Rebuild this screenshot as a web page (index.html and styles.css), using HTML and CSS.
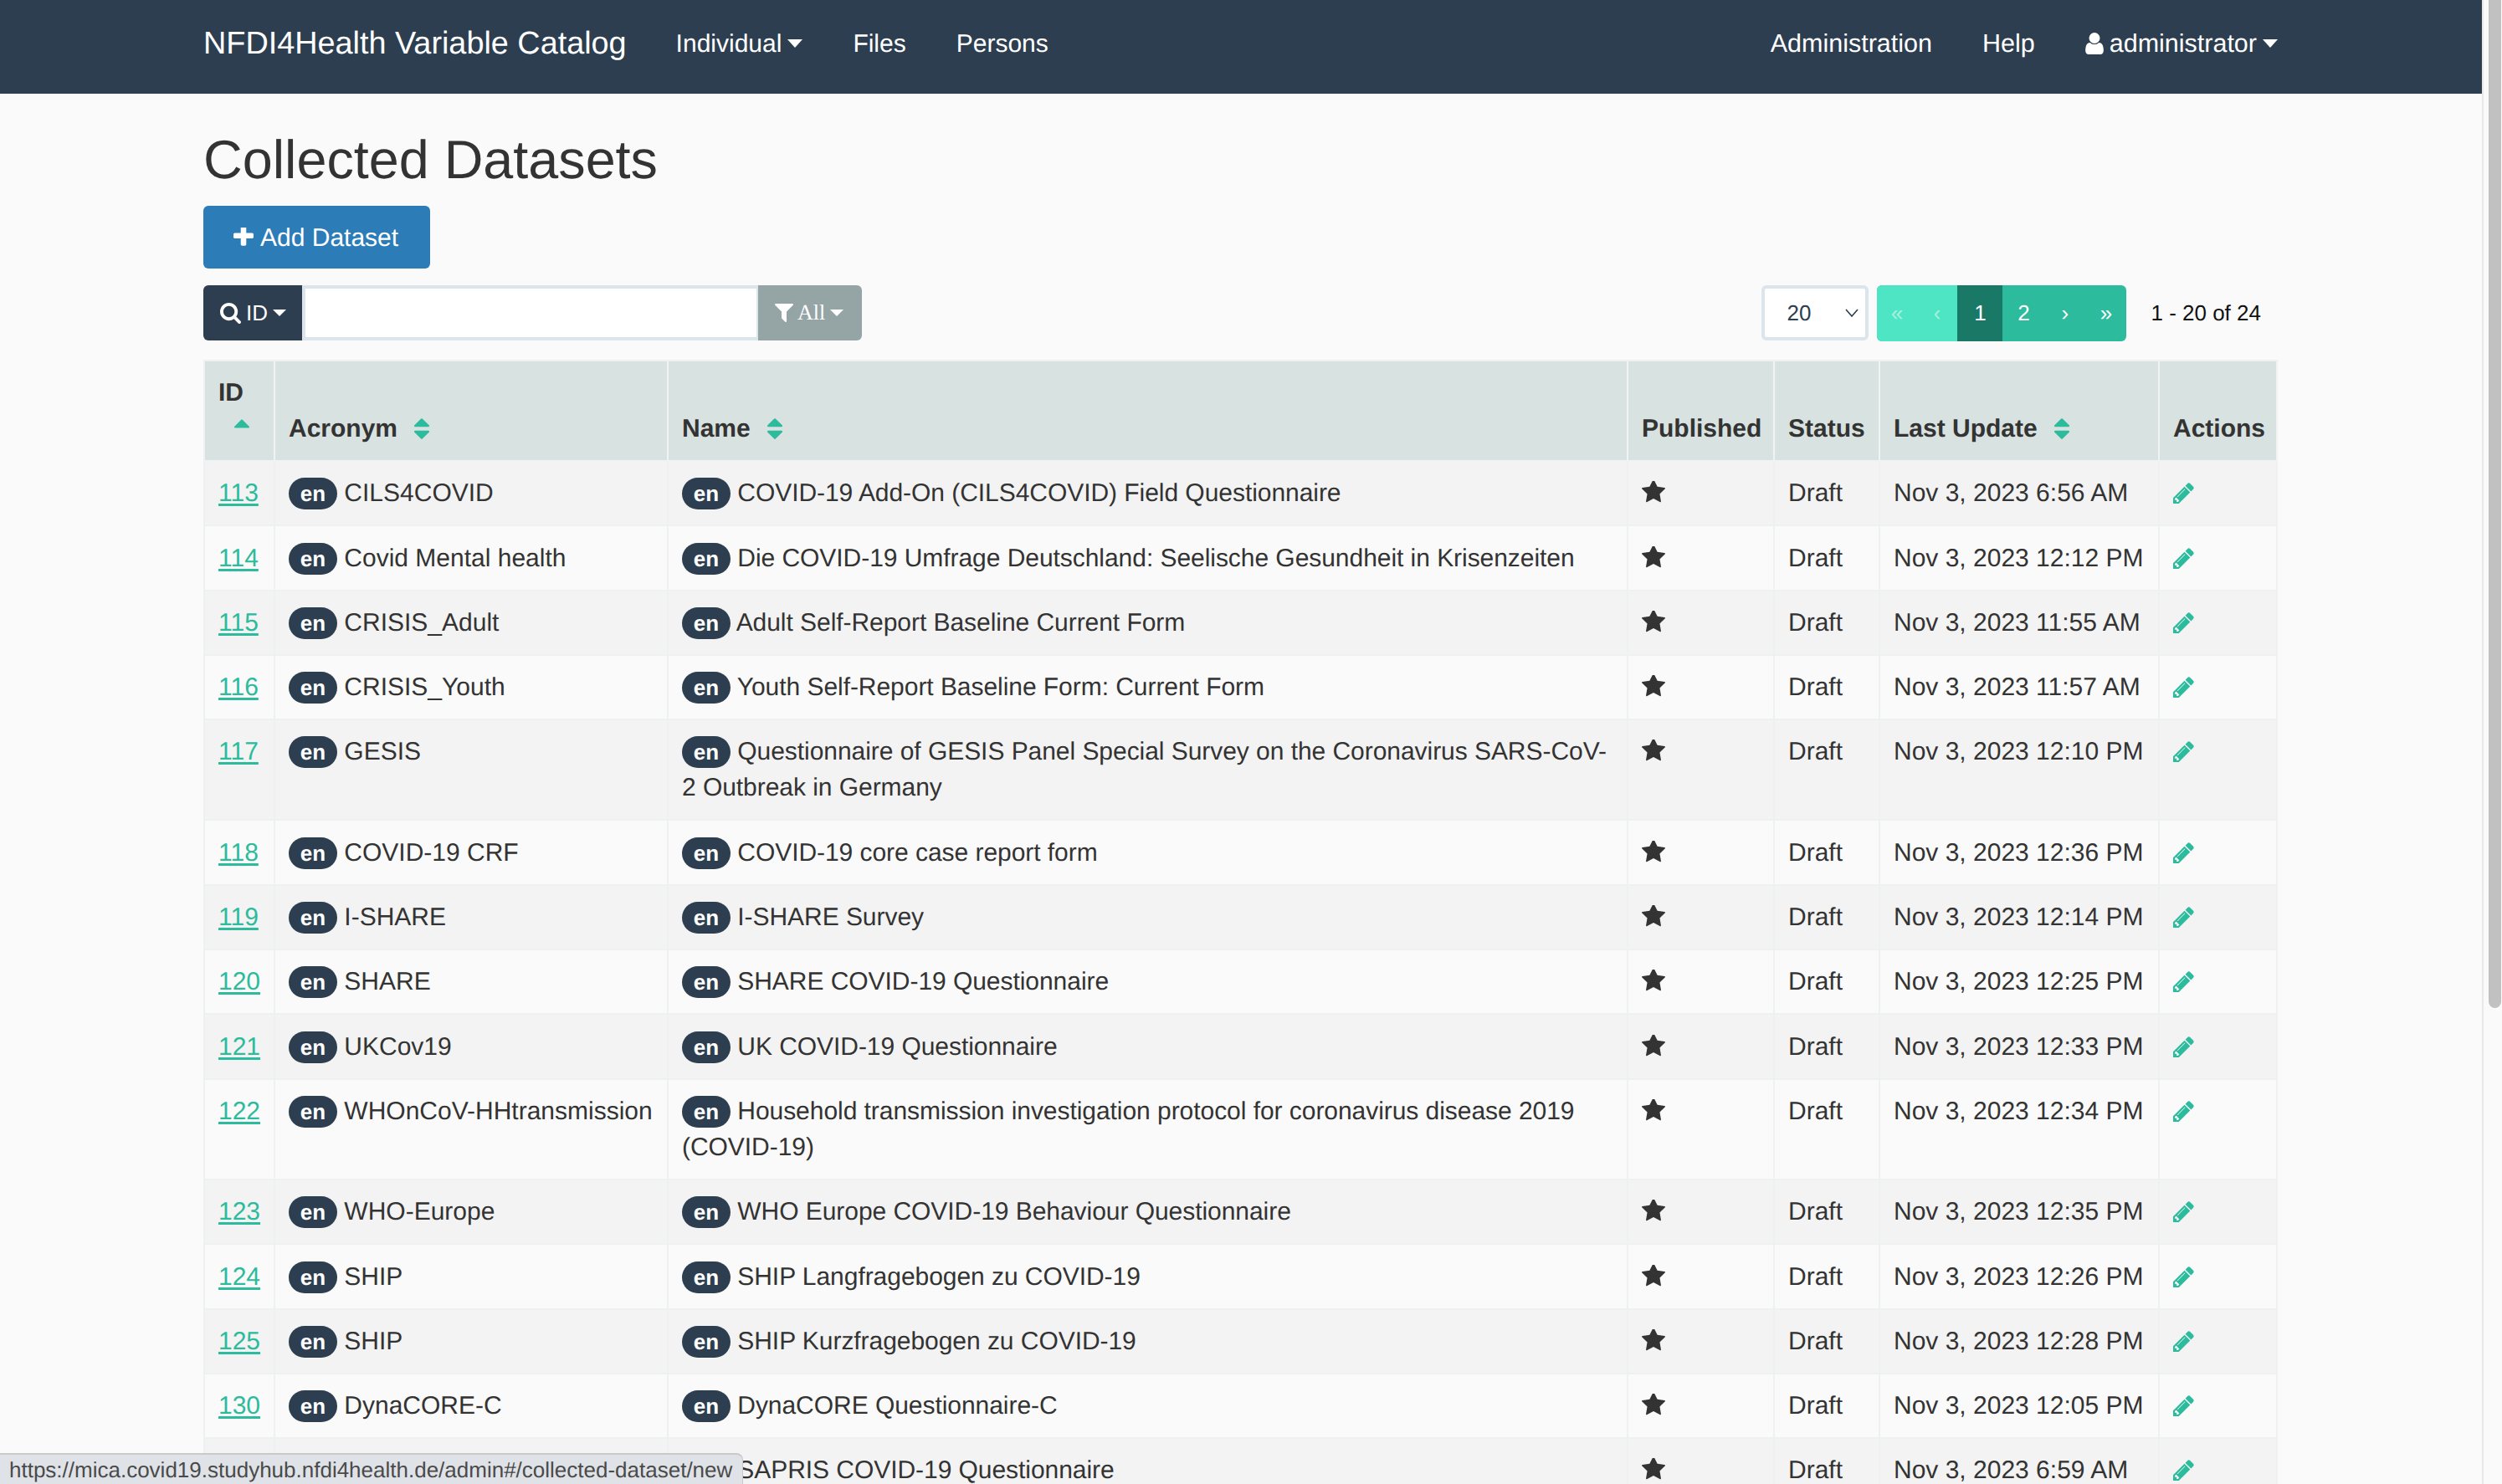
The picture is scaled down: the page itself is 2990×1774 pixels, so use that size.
FILE: index.html
```html
<!DOCTYPE html>
<html lang="en">
<head>
<meta charset="utf-8">
<title>Collected Datasets</title>
<link rel="stylesheet" href="styles.css">
</head>
<body>
<svg class="defs" xmlns="http://www.w3.org/2000/svg">
  <symbol id="i-pencil" viewBox="128 128 1536 1536"><path d="M491 1536l91-91-235-235-91 91v107h128v128h107zm523-928q0-22-22-22-10 0-17 7l-542 542q-7 7-7 17 0 22 22 22 10 0 17-7l542-542q7-7 7-17zm-54-192l416 416-832 832h-416v-416zm683 96q0 53-37 90l-166 166-416-416 166-165q36-38 90-38 53 0 91 38l235 234q37 39 37 91z"/></symbol>
  <symbol id="i-star" viewBox="64 128 1664 1600"><path d="M1728 647q0 22-26 48l-363 354 86 500q1 7 1 20 0 21-10.5 35.5t-30.5 14.5q-19 0-40-12l-449-236-449 236q-22 12-40 12-21 0-31.5-14.5t-10.5-35.5q0-6 2-20l86-500-364-354q-25-27-25-48 0-37 56-46l502-73 225-455q19-41 49-41t49 41l225 455 502 73q56 9 56 46z"/></symbol>
  <symbol id="i-user" viewBox="256 128 1280 1536"><path d="M1536 1399q0 109-62.5 187t-150.5 78h-854q-88 0-150.5-78t-62.5-187q0-85 8.5-160.5t31.5-152 58.5-131 94-89 134.5-34.5q131 128 313 128t313-128q76 0 134.5 34.5t94 89 58.5 131 31.5 152 8.5 160.5zm-256-887q0 159-112.5 271.5t-271.5 112.5-271.5-112.5-112.5-271.5 112.5-271.5 271.5-112.5 271.5 112.5 112.5 271.5z"/></symbol>
  <symbol id="i-search" viewBox="64 128 1664 1664"><path d="M1216 832q0-185-131.5-316.5t-316.5-131.5-316.5 131.5-131.5 316.5 131.5 316.5 316.5 131.5 316.5-131.5 131.5-316.5zm512 832q0 52-38 90t-90 38q-54 0-90-38l-343-342q-179 124-399 124-143 0-273.5-55.5t-225-150-150-225-55.5-273.5 55.5-273.5 150-225 225-150 273.5-55.5 273.5 55.5 225 150 150 225 55.5 273.5q0 220-124 399l343 343q37 37 37 90z"/></symbol>
  <symbol id="i-filter" viewBox="192 256 1408 1408"><path d="M1595 295q17 41-14 70l-493 493v742q0 42-39 59-13 5-25 5-27 0-45-19l-256-256q-19-19-19-45v-486l-493-493q-31-29-14-70 17-39 59-39h1280q42 0 59 39z"/></symbol>
  <symbol id="i-plus" viewBox="192 256 1408 1408"><path d="M1600 736v192q0 40-28 68t-68 28h-416v416q0 40-28 68t-68 28h-192q-40 0-68-28t-28-68v-416h-416q-40 0-68-28t-28-68v-192q0-40 28-68t68-28h416v-416q0-40 28-68t68-28h192q40 0 68 28t28 68v416h416q40 0 68 28t28 68z"/></symbol>
  <symbol id="i-sort" viewBox="384 192 1024 1408"><path d="M1408 1088q0 26-19 45l-448 448q-19 19-45 19t-45-19l-448-448q-19-19-19-45t19-45 45-19h896q26 0 45 19t19 45zm0-384q0 26-19 45t-45 19h-896q-26 0-45-19t-19-45 19-45l448-448q19-19 45-19t45 19l448 448q19 19 19 45z"/></symbol>
  <symbol id="i-sort-up" viewBox="384 192 1024 576"><path d="M1408 704q0 26-19 45t-45 19h-896q-26 0-45-19t-19-45 19-45l448-448q19-19 45-19t45 19l448 448q19 19 19 45z"/></symbol>
</svg>

<div class="page">
  <nav class="navbar">
    <a class="brand" href="#">NFDI4Health Variable Catalog</a>
    <a class="nav-link" href="#">Individual<span class="caret"></span></a>
    <a class="nav-link" href="#">Files</a>
    <a class="nav-link" href="#">Persons</a>
    <span class="nav-spacer"></span>
    <a class="nav-link nav-right" href="#">Administration</a>
    <a class="nav-link nav-right" href="#">Help</a>
    <a class="nav-link nav-right nav-last" href="#"><svg class="ic ic-user"><use href="#i-user"/></svg>administrator<span class="caret"></span></a>
  </nav>

  <main class="content">
    <h1 class="title">Collected Datasets</h1>
    <a class="btn-add" href="#"><svg class="ic ic-plus"><use href="#i-plus"/></svg>Add Dataset</a>

    <div class="toolbar">
      <div class="search">
        <button class="search-by" type="button"><svg class="ic ic-search"><use href="#i-search"/></svg>ID<span class="caret caret-sm"></span></button>
        <input class="search-input" type="text">
        <button class="search-filter" type="button"><svg class="ic ic-filter"><use href="#i-filter"/></svg>All<span class="caret caret-sm"></span></button>
      </div>
      <div class="paging">
        <div class="page-size"><span>20</span><svg class="chev" viewBox="0 0 16 10"><path d="M1 1l7 8 7-8" fill="none" stroke="#2c3e50" stroke-width="1.6"/></svg></div>
        <ul class="pager">
          <li class="off first">«</li>
          <li class="off">‹</li>
          <li class="on">1</li>
          <li class="second">2</li>
          <li>›</li>
          <li>»</li>
        </ul>
        <span class="count">1 - 20 of 24</span>
      </div>
    </div>

    <table class="grid">
      <colgroup>
        <col class="c-id"><col class="c-acr"><col class="c-name"><col class="c-pub"><col class="c-status"><col class="c-date"><col class="c-act">
      </colgroup>
      <thead>
        <tr>
          <th>ID <svg class="ic ic-sort-up"><use href="#i-sort-up"/></svg></th>
          <th>Acronym <svg class="ic ic-sort"><use href="#i-sort"/></svg></th>
          <th>Name <svg class="ic ic-sort"><use href="#i-sort"/></svg></th>
          <th>Published</th>
          <th>Status</th>
          <th>Last Update <svg class="ic ic-sort"><use href="#i-sort"/></svg></th>
          <th>Actions</th>
        </tr>
      </thead>
      <tbody>
        <tr><td><a href="#">113</a></td><td><span class="badge">en</span> CILS4COVID</td><td><span class="badge">en</span> COVID-19 Add-On (CILS4COVID) Field Questionnaire</td><td><svg class="ic ic-star"><use href="#i-star"/></svg></td><td>Draft</td><td>Nov 3, 2023 6:56 AM</td><td><svg class="ic ic-pencil"><use href="#i-pencil"/></svg></td></tr>
        <tr><td><a href="#">114</a></td><td><span class="badge">en</span> Covid Mental health</td><td><span class="badge">en</span> Die COVID-19 Umfrage Deutschland: Seelische Gesundheit in Krisenzeiten</td><td><svg class="ic ic-star"><use href="#i-star"/></svg></td><td>Draft</td><td>Nov 3, 2023 12:12 PM</td><td><svg class="ic ic-pencil"><use href="#i-pencil"/></svg></td></tr>
        <tr><td><a href="#">115</a></td><td><span class="badge">en</span> CRISIS_Adult</td><td><span class="badge">en</span> Adult Self-Report Baseline Current Form</td><td><svg class="ic ic-star"><use href="#i-star"/></svg></td><td>Draft</td><td>Nov 3, 2023 11:55 AM</td><td><svg class="ic ic-pencil"><use href="#i-pencil"/></svg></td></tr>
        <tr><td><a href="#">116</a></td><td><span class="badge">en</span> CRISIS_Youth</td><td><span class="badge">en</span> Youth Self-Report Baseline Form: Current Form</td><td><svg class="ic ic-star"><use href="#i-star"/></svg></td><td>Draft</td><td>Nov 3, 2023 11:57 AM</td><td><svg class="ic ic-pencil"><use href="#i-pencil"/></svg></td></tr>
        <tr><td><a href="#">117</a></td><td><span class="badge">en</span> GESIS</td><td><span class="badge">en</span> Questionnaire of GESIS Panel Special Survey on the Coronavirus SARS-CoV-2 Outbreak in Germany</td><td><svg class="ic ic-star"><use href="#i-star"/></svg></td><td>Draft</td><td>Nov 3, 2023 12:10 PM</td><td><svg class="ic ic-pencil"><use href="#i-pencil"/></svg></td></tr>
        <tr><td><a href="#">118</a></td><td><span class="badge">en</span> COVID-19 CRF</td><td><span class="badge">en</span> COVID-19 core case report form</td><td><svg class="ic ic-star"><use href="#i-star"/></svg></td><td>Draft</td><td>Nov 3, 2023 12:36 PM</td><td><svg class="ic ic-pencil"><use href="#i-pencil"/></svg></td></tr>
        <tr><td><a href="#">119</a></td><td><span class="badge">en</span> I-SHARE</td><td><span class="badge">en</span> I-SHARE Survey</td><td><svg class="ic ic-star"><use href="#i-star"/></svg></td><td>Draft</td><td>Nov 3, 2023 12:14 PM</td><td><svg class="ic ic-pencil"><use href="#i-pencil"/></svg></td></tr>
        <tr><td><a href="#">120</a></td><td><span class="badge">en</span> SHARE</td><td><span class="badge">en</span> SHARE COVID-19 Questionnaire</td><td><svg class="ic ic-star"><use href="#i-star"/></svg></td><td>Draft</td><td>Nov 3, 2023 12:25 PM</td><td><svg class="ic ic-pencil"><use href="#i-pencil"/></svg></td></tr>
        <tr><td><a href="#">121</a></td><td><span class="badge">en</span> UKCov19</td><td><span class="badge">en</span> UK COVID-19 Questionnaire</td><td><svg class="ic ic-star"><use href="#i-star"/></svg></td><td>Draft</td><td>Nov 3, 2023 12:33 PM</td><td><svg class="ic ic-pencil"><use href="#i-pencil"/></svg></td></tr>
        <tr><td><a href="#">122</a></td><td><span class="badge">en</span> WHOnCoV-HHtransmission</td><td><span class="badge">en</span> Household transmission investigation protocol for coronavirus disease 2019 (COVID-19)</td><td><svg class="ic ic-star"><use href="#i-star"/></svg></td><td>Draft</td><td>Nov 3, 2023 12:34 PM</td><td><svg class="ic ic-pencil"><use href="#i-pencil"/></svg></td></tr>
        <tr><td><a href="#">123</a></td><td><span class="badge">en</span> WHO-Europe</td><td><span class="badge">en</span> WHO Europe COVID-19 Behaviour Questionnaire</td><td><svg class="ic ic-star"><use href="#i-star"/></svg></td><td>Draft</td><td>Nov 3, 2023 12:35 PM</td><td><svg class="ic ic-pencil"><use href="#i-pencil"/></svg></td></tr>
        <tr><td><a href="#">124</a></td><td><span class="badge">en</span> SHIP</td><td><span class="badge">en</span> SHIP Langfragebogen zu COVID-19</td><td><svg class="ic ic-star"><use href="#i-star"/></svg></td><td>Draft</td><td>Nov 3, 2023 12:26 PM</td><td><svg class="ic ic-pencil"><use href="#i-pencil"/></svg></td></tr>
        <tr><td><a href="#">125</a></td><td><span class="badge">en</span> SHIP</td><td><span class="badge">en</span> SHIP Kurzfragebogen zu COVID-19</td><td><svg class="ic ic-star"><use href="#i-star"/></svg></td><td>Draft</td><td>Nov 3, 2023 12:28 PM</td><td><svg class="ic ic-pencil"><use href="#i-pencil"/></svg></td></tr>
        <tr><td><a href="#">130</a></td><td><span class="badge">en</span> DynaCORE-C</td><td><span class="badge">en</span> DynaCORE Questionnaire-C</td><td><svg class="ic ic-star"><use href="#i-star"/></svg></td><td>Draft</td><td>Nov 3, 2023 12:05 PM</td><td><svg class="ic ic-pencil"><use href="#i-pencil"/></svg></td></tr>
        <tr><td><a href="#">131</a></td><td><span class="badge">en</span> SAPRIS</td><td><span class="badge">en</span> SAPRIS COVID-19 Questionnaire</td><td><svg class="ic ic-star"><use href="#i-star"/></svg></td><td>Draft</td><td>Nov 3, 2023 6:59 AM</td><td><svg class="ic ic-pencil"><use href="#i-pencil"/></svg></td></tr>
      </tbody>
    </table>
  </main>
</div>

<div class="scrollbar"><div class="thumb"></div></div>
<div class="status-url">https://mica.covid19.studyhub.nfdi4health.de/admin#/collected-dataset/new</div>
</body>
</html>
```

FILE: styles.css
```css
* { box-sizing: border-box; }
html, body { height: 100%; }
body {
  margin: 0;
  display: flex;
  overflow: hidden;
  background: #fafafa;
  color: #333;
  font-family: "Liberation Sans", Arial, sans-serif;
  font-size: 30px;
  line-height: 43px;
  text-rendering: geometricPrecision;
}
a { color: inherit; text-decoration: none; }
.defs { position: absolute; width: 0; height: 0; }
.ic { fill: currentColor; display: inline-block; }

.page { flex: 1; min-width: 0; height: 100%; overflow: hidden; }
.scrollbar { flex: 0 0 24px; background: #fafafa; border-left: 2px solid #e8e8e8; padding: 0 1px 0 6px; }
.thumb { height: 1205px; background: #c1c1c1; border-radius: 0 0 8px 8px; }

.navbar {
  height: 112px;
  background: #2c3e50;
  color: #fff;
  display: flex;
  align-items: flex-start;
  padding: 31px 244px 0 243px;
}
.brand { font-size: 37.8px; line-height: 43px; margin-right: 29px; }
.nav-link { padding: 0 30px; white-space: nowrap; }
.nav-right { font-size: 30.5px; }
.nav-last { padding-right: 0; }
.nav-spacer { flex: 1; }
.caret {
  display: inline-block;
  width: 0;
  height: 0;
  margin-left: 7px;
  vertical-align: 5px;
  border-top: 10px solid currentColor;
  border-left: 9px solid transparent;
  border-right: 9px solid transparent;
}
.caret-sm { margin-left: 6px; border-top-width: 8px; border-left-width: 8px; border-right-width: 8px; vertical-align: 3px; }
.ic-user { width: 22px; height: 26px; margin-right: 7px; vertical-align: -3px; }

.content { padding: 0 244px 0 243px; }
.title { margin: 44px 0 20px; font-size: 64.7px; line-height: 70px; font-weight: 400; }
.btn-add {
  display: flex;
  align-items: center;
  width: 271px;
  height: 75px;
  padding: 1px 0 0 36px;
  background: #2c7cb8;
  color: #fff;
  border-radius: 6px;
}
.ic-plus { width: 24px; height: 24px; margin-right: 8px; }

.toolbar { display: flex; justify-content: space-between; align-items: flex-start; margin: 20px 0 22px; }
.search { display: flex; height: 66px; }
.search-by, .search-filter {
  display: flex;
  align-items: center;
  border: 0;
  color: #fff;
  padding: 0;
  font-size: 26px;
  text-rendering: geometricPrecision;
}
.search-by {
  width: 118px;
  padding-left: 20px;
  background: #2c3e50;
  border-radius: 6px 0 0 6px;
  font-family: "Liberation Sans", Arial, sans-serif;
}
.search-filter {
  width: 124px;
  padding-left: 20px;
  background: #95a5a6;
  border-radius: 0 6px 6px 0;
  font-family: "Liberation Serif", "Times New Roman", serif;
}
.ic-search { width: 25px; height: 25px; margin-right: 6px; }
.ic-filter { width: 22px; height: 24px; margin-right: 5px; }
.search-input {
  width: 545px;
  border: 4px solid #dce4ec;
  border-right-width: 2px;
  background: #fff;
  padding: 0;
  outline: 0;
}
.paging { display: flex; align-items: flex-start; margin-right: 20px; }
.page-size {
  display: flex;
  align-items: center;
  justify-content: space-between;
  width: 128px;
  height: 66px;
  padding: 0 8px 0 26px;
  background: #fff;
  border: 4px solid #dce4ec;
  border-radius: 6px;
  color: #2c3e50;
  font-size: 26px;
}
.chev { width: 16px; height: 10px; }
.pager {
  display: flex;
  list-style: none;
  margin: 0 0 0 10px;
  padding: 0;
  height: 67px;
  border-radius: 6px;
  overflow: hidden;
  color: #fff;
  font-size: 26px;
  line-height: 67px;
  background: #2cbb9c;
}
.pager li { width: 49px; text-align: center; }
.pager .first { width: 47px; }
.pager .off { background: #4de5c3; color: #a8f0de; }
.pager .on { width: 54px; background: #1a7866; }
.pager .second { width: 50px; }
.count { margin-left: 29px; font-size: 26px; line-height: 66px; color: #111; }

.grid {
  width: 2479px;
  table-layout: fixed;
  border-collapse: separate;
  border-spacing: 0;
  border-top: 2px solid #eef1f1;
  border-left: 2px solid #eef1f1;
}
.c-id { width: 84px; }
.c-acr { width: 470px; }
.c-name { width: 1147px; }
.c-pub { width: 175px; }
.c-status { width: 126px; }
.c-date { width: 334px; }
.c-act { width: 141px; }
.grid th, .grid td {
  padding: 16px;
  text-align: left;
  vertical-align: top;
  border-right: 2px solid #eef1f1;
  border-bottom: 2px solid #eef1f1;
}
.grid td { padding-top: 16.3px; }
.grid th {
  vertical-align: bottom;
  background: #d8e2e0;
  border-right-color: #f0f3f3;
  border-bottom-color: #f0f3f3;
  font-weight: 700;
}
.grid td:nth-child(2), .grid td:nth-child(6) { white-space: nowrap; }
.grid td:nth-child(3) { letter-spacing: -0.05px; }
.grid tbody tr:nth-child(odd) td { background: #f3f3f3; }
.grid td a { color: #2cbb9c; text-decoration: underline; text-decoration-thickness: 3px; text-underline-offset: 3px; }
.ic-sort { width: 18px; height: 25px; margin-left: 12px; vertical-align: -3px; color: #2cbb9c; }
.ic-sort-up { width: 18px; height: 11px; margin-left: 19px; vertical-align: 10px; color: #2cbb9c; }
.badge {
  display: inline-block;
  width: 58px;
  height: 38px;
  border-radius: 19px;
  background: #2c3e50;
  color: #fff;
  font-size: 26px;
  font-weight: 700;
  letter-spacing: 0;
  line-height: 38px;
  text-align: center;
  vertical-align: baseline;
}
.ic-star { width: 28px; height: 27px; vertical-align: -3px; color: #333; }
.ic-pencil { width: 25px; height: 25px; vertical-align: -3px; color: #2cbb9c; }

.status-url {
  position: fixed;
  left: 0;
  bottom: 0;
  width: 888px;
  height: 37px;
  padding-left: 11px;
  background: #dfe3e8;
  border-top: 2px solid #c9c9c9;
  border-right: 1px solid #c9c9c9;
  border-radius: 0 8px 0 0;
  color: #4a4a4a;
  font-size: 26px;
  line-height: 36px;
  white-space: nowrap;
}
```
